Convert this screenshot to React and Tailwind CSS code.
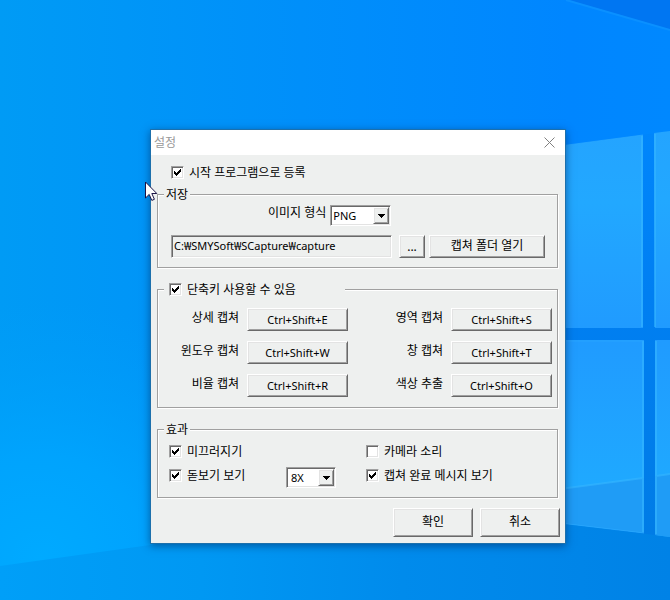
import React, { useState } from 'react'
import clsx from 'clsx'

// Shortcut rows, left and right column
const shortcutRows = [
  [
    { id: 'detail', label: '상세 캡쳐', keys: 'Ctrl+Shift+E' },
    { id: 'area', label: '영역 캡쳐', keys: 'Ctrl+Shift+S' },
  ],
  [
    { id: 'window', label: '윈도우 캡쳐', keys: 'Ctrl+Shift+W' },
    { id: 'pane', label: '창 캡쳐', keys: 'Ctrl+Shift+T' },
  ],
  [
    { id: 'ratio', label: '비율 캡쳐', keys: 'Ctrl+Shift+R' },
    { id: 'color', label: '색상 추출', keys: 'Ctrl+Shift+O' },
  ],
]

const raised =
  'border border-t-white border-l-white border-r-[#696969] border-b-[#696969] shadow-[inset_1px_1px_0_#e3e3e3,inset_-1px_-1px_0_#a0a0a0]'
const sunken =
  'border border-t-[#a0a0a0] border-l-[#a0a0a0] border-r-white border-b-white shadow-[inset_1px_1px_0_#696969,inset_-1px_-1px_0_#e3e3e3]'

const Button = ({ className, children, ...props }) => (
  <button
    type="button"
    className={clsx('shrink-0 bg-[#eef0ef] text-center leading-4', raised, className)}
    {...props}
  >
    {children}
  </button>
)

const Checkbox = ({ label, defaultChecked = false }) => {
  const [checked, setChecked] = useState(defaultChecked)

  return (
    <label className="flex h-[17px] items-center gap-[5px]">
      <span className="relative block h-[13px] w-[13px]">
        <input
          type="checkbox"
          checked={checked}
          onChange={(e) => setChecked(e.target.checked)}
          className={clsx('block h-[13px] w-[13px] appearance-none bg-white', sunken)}
        />
        {checked && (
          <svg
            viewBox="0 0 13 13"
            shapeRendering="crispEdges"
            className="pointer-events-none absolute inset-0 h-[13px] w-[13px]"
          >
            <path d="M3 5h1v1h1v1h1v-1h1v-1h1v-1h1v-1h1v3h-1v1h-1v1h-1v1h-1v1h-1v-1h-1v-1h-1z" />
          </svg>
        )}
      </span>
      <span>{label}</span>
    </label>
  )
}

const Select = ({ className, selectClass, options, ...props }) => (
  <div className={clsx('relative h-[21px] bg-white', sunken, className)}>
    <select
      className={clsx('block h-full w-full appearance-none bg-transparent pr-5 text-[11px] outline-none', selectClass)}
      {...props}
    >
      {options.map((option) => (
        <option key={option}>{option}</option>
      ))}
    </select>
    <span
      className={clsx(
        'pointer-events-none absolute top-px right-px bottom-px flex w-4 items-center justify-center bg-[#eef0ef]',
        raised
      )}
    >
      <svg viewBox="0 0 7 4" shapeRendering="crispEdges" className="h-1 w-[7px]">
        <path d="M0 0h7v1h-1v1h-1v1h-1v1h-1v-1h-1v-1h-1v-1h-1z" />
      </svg>
    </span>
  </div>
)

const Group = ({ legend, legendClass, children }) => (
  <fieldset className="min-w-0 border border-[#a0a0a0] shadow-[inset_1px_1px_0_#fff,1px_1px_0_#fff]">
    <legend className={clsx('ml-1.5 h-[17px] bg-[#eef0ef] leading-[17px]', legendClass)}>{legend}</legend>
    {children}
  </fieldset>
)

const Wallpaper = () => (
  <svg
    viewBox="0 0 670 600"
    preserveAspectRatio="xMidYMid slice"
    className="absolute inset-0 h-full w-full"
    aria-hidden="true"
  >
    <defs>
      <linearGradient id="sky" x1="0" y1="0" x2="1" y2="0">
        <stop offset="0" stopColor="#009bf5" />
        <stop offset="0.45" stopColor="#008ffa" />
        <stop offset="0.85" stopColor="#0086ff" />
        <stop offset="1" stopColor="#0088ff" />
      </linearGradient>
      <radialGradient id="glow" gradientUnits="userSpaceOnUse" cx="40" cy="560" r="260">
        <stop offset="0" stopColor="#00aaff" />
        <stop offset="0.4" stopColor="#00a6ff" stopOpacity="0.8" />
        <stop offset="1" stopColor="#009ff8" stopOpacity="0" />
      </radialGradient>
      <linearGradient id="floor" x1="0" y1="0" x2="1" y2="0">
        <stop offset="0" stopColor="#009ff8" />
        <stop offset="0.3" stopColor="#0098f3" />
        <stop offset="0.6" stopColor="#008bec" />
        <stop offset="1" stopColor="#0082e6" />
      </linearGradient>
      <linearGradient id="frame" x1="0" y1="0" x2="0" y2="1">
        <stop offset="0" stopColor="#0086fc" />
        <stop offset="0.4" stopColor="#007ff2" />
        <stop offset="1" stopColor="#007ce6" />
      </linearGradient>
      <linearGradient id="pane" x1="0" y1="0" x2="0" y2="1">
        <stop offset="0" stopColor="#24a4ff" />
        <stop offset="0.35" stopColor="#22a8ff" />
        <stop offset="1" stopColor="#209bff" />
      </linearGradient>
      <linearGradient id="paneLow" gradientUnits="userSpaceOnUse" x1="0" y1="340" x2="0" y2="485">
        <stop offset="0" stopColor="#209bff" />
        <stop offset="1" stopColor="#1fa9ff" />
      </linearGradient>
    </defs>
    <rect width="670" height="600" fill="url(#sky)" />
    <rect width="670" height="600" fill="url(#glow)" />
    <path d="M568 0L670 30V0z" fill="#0076f2" />
    <path d="M566 0L670 30" stroke="#0a90ff" strokeWidth="2" />
    <path d="M0 566L150 545L400 510H670V600H0z" fill="url(#floor)" />
    <path d="M560 146L670 131V537L560 523z" fill="url(#frame)" />
    {/* Window panes */}
    <path d="M500 154L643 135V328H500z" fill="url(#pane)" />
    <path d="M654 133L670 131V328H655z" fill="url(#pane)" />
    <path d="M500 340H644V533L500 516z" fill="url(#paneLow)" />
    <path d="M655 340H670V537L655 535z" fill="url(#paneLow)" />
    {/* Darker glass under the light beam */}
    <path d="M560 489L644 478V533L560 523z" fill="#1f9cf6" />
    <path d="M655 476L670 474V537L655 535z" fill="#1f9cf6" />
    <path
      d="M642 136V327M643 341V532M655 134V327M656 341V534M560 489L643 478M656 476L670 474"
      stroke="#35b6ff"
      strokeWidth="2"
      opacity="0.6"
      fill="none"
    />
    <path d="M560 146L643 135M560 523L644 533M560 341H643" stroke="#2caaff" opacity="0.7" fill="none" />
  </svg>
)

const Cursor = () => (
  <svg viewBox="0 0 13 21" className="pointer-events-none absolute top-[181px] left-[145px] h-[21px] w-[13px]">
    <path
      d="M0.5 1v16l3.7-3.6l2.6 6l2.6-1.1l-2.6-5.8h5z"
      fill="#fff"
      stroke="#1c1446"
      strokeWidth="1"
    />
  </svg>
)

const SettingsDialog = () => (
  <div
    role="dialog"
    aria-labelledby="dialog-title"
    className="relative w-full border border-[#1c70ac] bg-[#eef0ef] shadow-[0_2px_8px_rgba(0,30,80,0.5)]"
  >
    <header className="flex h-[25px] items-center justify-between bg-white pr-2.5 pl-[3px]">
      <h1 id="dialog-title" className="text-[#999]">설정</h1>
      <button type="button" aria-label="닫기">
        <svg viewBox="0 0 11 11" className="h-[11px] w-[11px]" stroke="#808080" fill="none">
          <path d="M0.5 0.5l10 10M10.5 0.5l-10 10" />
        </svg>
      </button>
    </header>

    <div className="flex flex-col gap-[13px] pt-[9px] pr-[7px] pb-1.5 pl-1.5">
      <div className="-mb-2 pl-3.5">
        <Checkbox label="시작 프로그램으로 등록" defaultChecked />
      </div>

      {/* Save */}
      <Group legend="저장" legendClass="px-0.5">
        <div className="flex flex-col gap-[9px] pt-0.5 pr-3 pb-[9px] pl-[13px]">
          <div className="flex gap-1 pl-[97px]">
            <label htmlFor="format" className="leading-4">이미지 형식</label>
            <Select id="format" className="w-[61px]" selectClass="pl-0.5" options={['PNG', 'JPG', 'BMP']} />
          </div>
          <div className="flex">
            <input
              type="text"
              readOnly
              aria-label="저장 폴더"
              value="C:₩SMYSoft₩SCapture₩capture"
              className={clsx('mr-[7px] h-[23px] min-w-0 flex-1 bg-[#eef0ef] px-0.5 pb-0.5 text-[11px] outline-none', sunken)}
            />
            <Button className="mr-1 h-[23px] w-[26px]" aria-label="폴더 선택">...</Button>
            <Button className="h-[23px] w-[116px] pb-0.5">캡쳐 폴더 열기</Button>
          </div>
        </div>
      </Group>

      {/* Shortcuts */}
      <Group
        legend={<Checkbox label="단축키 사용할 수 있음" defaultChecked />}
        legendClass="w-[181px] pl-[5px]"
      >
        <div className="flex flex-col gap-2.5 pt-2.5 pr-[5px] pb-2.5 pl-5">
          {shortcutRows.map((row) => (
            <div key={row[0].id} className="flex justify-between">
              {row.map(({ id, label, keys }) => (
                <div key={id} className="flex gap-2">
                  <label htmlFor={id} className="w-[61px] text-right leading-5">{label}</label>
                  <Button id={id} className="h-[23px] w-[101px] text-[11px]">{keys}</Button>
                </div>
              ))}
            </div>
          ))}
        </div>
      </Group>

      {/* Effects */}
      <Group legend="효과" legendClass="px-0.5">
        <div className="grid grid-cols-2 gap-x-1.5 gap-y-[7px] pt-[5px] pb-[9px] pl-[11px]">
          <Checkbox label="미끄러지기" defaultChecked />
          <Checkbox label="카메라 소리" />
          <div className="flex justify-between pr-6">
            <Checkbox label="돋보기 보기" defaultChecked />
            <Select
              className="w-[50px]"
              selectClass="pl-1"
              aria-label="돋보기 배율"
              options={['8X', '4X', '2X']}
            />
          </div>
          <Checkbox label="캡쳐 완료 메시지 보기" defaultChecked />
        </div>
      </Group>

      <div className="-mt-[3px] -mr-0.5 flex justify-end gap-[7px]">
        <Button className="h-[29px] w-20 pb-0.5">확인</Button>
        <Button className="h-[29px] w-20 pb-0.5">취소</Button>
      </div>
    </div>
  </div>
)

const App = () => {
  return (
    <main className="relative min-h-screen w-full overflow-hidden bg-[#0090f5] pt-[129px] pr-[104px] pb-14 pl-[150px] font-['Noto_Sans','Noto_Sans_CJK_KR',sans-serif] text-[12px] leading-4 text-black">
      <Wallpaper />
      <SettingsDialog />
      <Cursor />
    </main>
  )
}

export default App
